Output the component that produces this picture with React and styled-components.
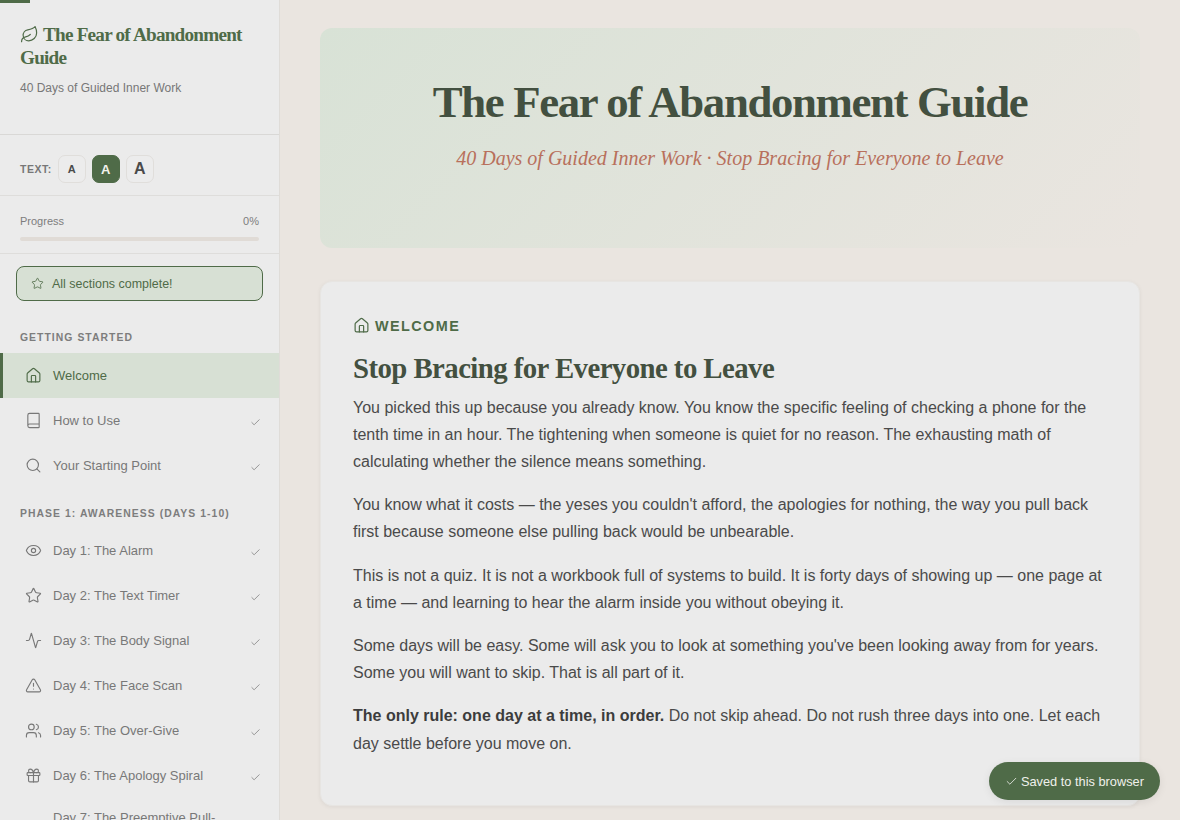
import React from "react";
import styled, { createGlobalStyle } from "styled-components";
import { Leaf, Star, House, Book, Search, Eye, Activity, TriangleAlert, Users, Gift, Check } from "lucide-react";

const Global = createGlobalStyle`
  html, body { margin: 0; padding: 0; height: 100%; overflow: hidden; }
  * { box-sizing: border-box; }
  body { font-family: "Liberation Sans", Arial, sans-serif; background: #eae5e0; }
`;

const Page = styled.div`
  display: flex;
  width: 1180px;
  height: 820px;
  overflow: hidden;
  background: #eae5e0;
  position: relative;
`;
const TopBar = styled.div`
  position: absolute;
  top: 0;
  left: 0;
  width: 30px;
  height: 3px;
  background: #4f6b48;
`;
const Sidebar = styled.aside`
  flex: 0 0 280px;
  width: 280px;
  height: 820px;
  overflow: hidden;
  background: #ebebeb;
  border-right: 1px solid #dfdcd8;
`;
const Brand = styled.div`
  padding: 23px 20px 0;
  border-bottom: 1px solid #d9d8d6;
  height: 135px;
`;
const BrandTitle = styled.h1`
  margin: 0;
  font: 700 19.2px/23px "Liberation Serif", serif;
  letter-spacing: -0.78px;
  color: #4f6b48;
  svg { vertical-align: -3px; margin-right: 4px; }
`;
const BrandSub = styled.p`
  margin: 11px 0 0;
  font-size: 12px;
  line-height: 16px;
  color: #777;
`;
const TextRow = styled.div`
  display: flex;
  align-items: center;
  height: 61px;
  padding: 8px 20px 0;
  gap: 6px;
  border-bottom: 1px solid #dedddb;
`;
const TextLabel = styled.span`
  font-size: 10.5px;
  font-weight: 700;
  letter-spacing: 0.5px;
  color: #777;
`;
const SizeButton = styled.button`
  width: 28px;
  height: 28px;
  padding: 0;
  border-radius: 7px;
  border: 1px solid ${(p) => (p.$active ? "#4f6b48" : "#e0dedb")};
  background: ${(p) => (p.$active ? "#4f6b48" : "#ececec")};
  color: ${(p) => (p.$active ? "#f2f2ee" : "#4a4a4a")};
  font: 700 ${(p) => p.$size}px/1 "Liberation Sans", sans-serif;
`;
const ProgressBox = styled.div`
  height: 58px;
  padding: 19px 20px 0;
  border-bottom: 1px solid #dedddb;
`;
const ProgressHead = styled.div`
  display: flex;
  justify-content: space-between;
  font-size: 11px;
  line-height: 13px;
  color: #7d7d7d;
`;
const Track = styled.div`
  height: 4px;
  margin-top: 9px;
  background: #e0dbd6;
  border-radius: 2px;
`;
const Complete = styled.div`
  display: flex;
  align-items: center;
  gap: 8px;
  height: 35px;
  margin: 12px 16px 0;
  padding: 0 14px;
  border: 1px solid #4f6b48;
  border-radius: 8px;
  background: #d7e0d4;
  color: #4f6b48;
  font-size: 12.48px;
`;
const Section = styled.div`
  margin-top: ${(p) => p.$top}px;
  padding: 0 20px;
  height: 13px;
  font-size: 10.4px;
  line-height: 13px;
  font-weight: 700;
  letter-spacing: ${(p) => p.$ls}px;
  color: #7d7d7d;
  margin-bottom: ${(p) => p.$bottom}px;
`;
const Item = styled.div`
  display: flex;
  align-items: ${(p) => (p.$wrap ? "flex-start" : "center")};
  height: ${(p) => (p.$wrap ? "62px" : "45.1px")};
  padding: ${(p) => (p.$wrap ? "10px" : "0")} 18px 0 25px;
  gap: 11px;
  font-size: 13px;
  color: ${(p) => (p.$active ? "#4f6b48" : "#787878")};
  background: ${(p) => (p.$active ? "#d7e0d4" : "transparent")};
  box-shadow: ${(p) => (p.$active ? "inset 3px 0 0 #4f6b48" : "none")};
`;
const ItemLabel = styled.span`
  flex: 1;
  white-space: ${(p) => (p.$wrap ? "normal" : "nowrap")};
  line-height: 17px;
`;
const IconSlot = styled.span`
  flex: none;
  width: 17px;
  height: 17px;
  display: flex;
`;
const Main = styled.main`
  flex: 1;
  min-width: 0;
  padding: 28px 40px 0;
`;
const Hero = styled.header`
  height: 220px;
  padding-top: 46px;
  border-radius: 12px;
  background: linear-gradient(135deg, #d8e2d6 0%, #eae5e0 100%);
  text-align: center;
`;
const HeroTitle = styled.h2`
  margin: 0;
  font: 700 44.8px/56px "Liberation Serif", serif;
  letter-spacing: -1.36px;
  color: #435040;
`;
const HeroSub = styled.p`
  margin: 15px 0 0;
  font: italic 400 20px/26px "Liberation Serif", serif;
  color: #b8705c;
`;
const Card = styled.section`
  height: 525px;
  margin-top: 33px;
  padding: 35px 32px 0;
  border: 1px solid #e7e5e2;
  border-radius: 12px;
  background: #ebebeb;
  box-shadow: 0 1px 4px rgba(0, 0, 0, 0.06);
`;
const Eyebrow = styled.div`
  display: flex;
  align-items: center;
  gap: 5px;
  height: 17px;
  font-size: 14.4px;
  font-weight: 700;
  letter-spacing: 1.44px;
  color: #4f6b48;
`;
const CardTitle = styled.h3`
  margin: 16px 0 7.5px;
  font: 700 28.8px/36px "Liberation Serif", serif;
  letter-spacing: -0.56px;
  color: #435040;
`;
const Para = styled.p`
  margin: 0 0 16px;
  font-size: 16px;
  line-height: 27.2px;
  color: #4a4a4a;
  strong { font-weight: 700; color: #3c3c3c; }
`;
const Toast = styled.div`
  position: absolute;
  right: 20px;
  bottom: 20px;
  display: flex;
  align-items: center;
  gap: 3px;
  height: 38px;
  padding: 0 16px;
  border-radius: 19px;
  background: #4f6b48;
  color: #f0f1ec;
  font-size: 12.8px;
  box-shadow: 0 2px 8px rgba(0, 0, 0, 0.08);
`;
const Tick = styled(Check)`
  flex: none;
  align-self: center;
  margin-top: 3px;
  color: #6f6f6f;
`;

const Row = ({ icon: Icon, label, active }) => (
  <Item $active={active} $wrap={!Icon}>
    <IconSlot>{Icon && <Icon size={17} strokeWidth={1.6} />}</IconSlot>
    <ItemLabel $wrap={!Icon}>{label}</ItemLabel>
    {!active && <Tick size={11} strokeWidth={1.5} />}
  </Item>
);

export default function App() {
  return (
    <Page>
      <Global />
      <TopBar />
      <Sidebar>
        <Brand>
          <BrandTitle><Leaf size={19} strokeWidth={1.5} />The Fear of Abandonment Guide</BrandTitle>
          <BrandSub>40 Days of Guided Inner Work</BrandSub>
        </Brand>
        <TextRow>
          <TextLabel>TEXT:</TextLabel>
          <SizeButton $size={11}>A</SizeButton>
          <SizeButton $size={13} $active>A</SizeButton>
          <SizeButton $size={16}>A</SizeButton>
        </TextRow>
        <ProgressBox>
          <ProgressHead><span>Progress</span><span>0%</span></ProgressHead>
          <Track />
        </ProgressBox>
        <Complete><Star size={13} strokeWidth={1.5} />All sections complete!</Complete>
        <Section $top={30} $bottom={9} $ls={1.04}>GETTING STARTED</Section>
        <Row icon={House} label="Welcome" active />
        <Row icon={Book} label="How to Use" />
        <Row icon={Search} label="Your Starting Point" />
        <Section $top={19} $bottom={7.7} $ls={1.05}>PHASE 1: AWARENESS (DAYS 1-10)</Section>
        <Row icon={Eye} label="Day 1: The Alarm" />
        <Row icon={Star} label="Day 2: The Text Timer" />
        <Row icon={Activity} label="Day 3: The Body Signal" />
        <Row icon={TriangleAlert} label="Day 4: The Face Scan" />
        <Row icon={Users} label="Day 5: The Over-Give" />
        <Row icon={Gift} label="Day 6: The Apology Spiral" />
        <Row label="Day 7: The Preemptive Pull-Back" />
      </Sidebar>
      <Main>
        <Hero>
          <HeroTitle>The Fear of Abandonment Guide</HeroTitle>
          <HeroSub>40 Days of Guided Inner Work · Stop Bracing for Everyone to Leave</HeroSub>
        </Hero>
        <Card>
          <Eyebrow><House size={17} strokeWidth={1.7} />WELCOME</Eyebrow>
          <CardTitle>Stop Bracing for Everyone to Leave</CardTitle>
          <Para>You picked this up because you already know. You know the specific feeling of checking a phone for the tenth time in an hour. The tightening when someone is quiet for no reason. The exhausting math of calculating whether the silence means something.</Para>
          <Para>You know what it costs — the yeses you couldn't afford, the apologies for nothing, the way you pull back first because someone else pulling back would be unbearable.</Para>
          <Para>This is not a quiz. It is not a workbook full of systems to build. It is forty days of showing up — one page at a time — and learning to hear the alarm inside you without obeying it.</Para>
          <Para>Some days will be easy. Some will ask you to look at something you've been looking away from for years. Some you will want to skip. That is all part of it.</Para>
          <Para><strong>The only rule: one day at a time, in order.</strong> Do not skip ahead. Do not rush three days into one. Let each day settle before you move on.</Para>
        </Card>
      </Main>
      <Toast><Check size={13} strokeWidth={1.5} />Saved to this browser</Toast>
    </Page>
  );
}
